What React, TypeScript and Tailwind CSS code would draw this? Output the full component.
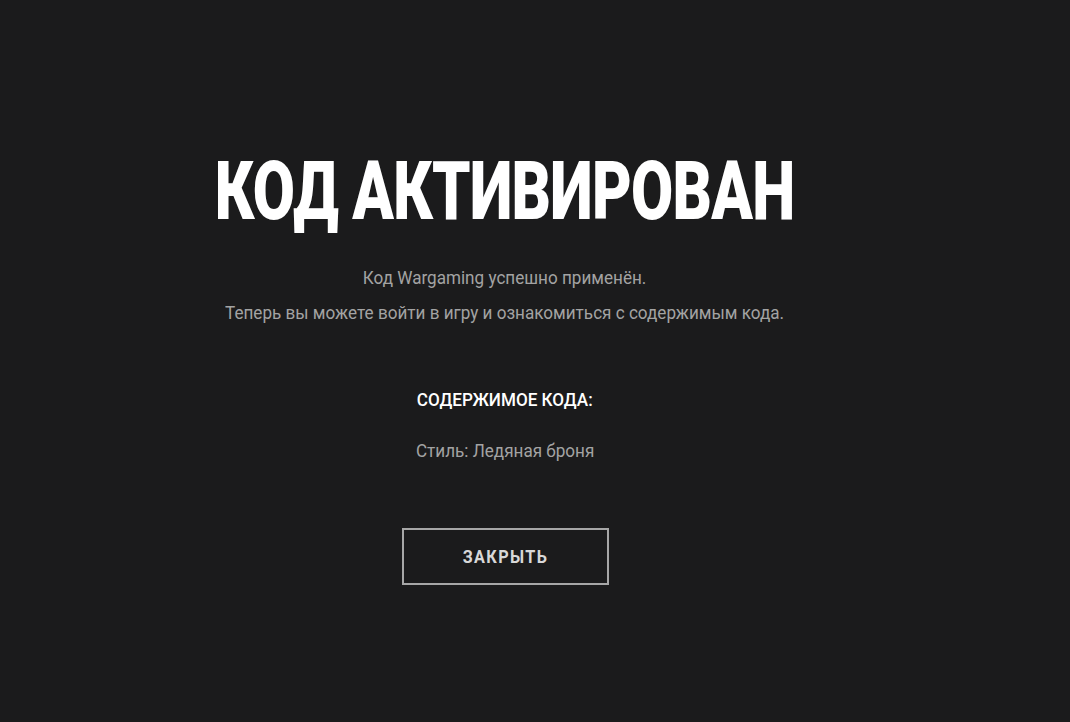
import React from "react";

export default function App() {
  return (
    <div className="w-[1070px] h-[722px] bg-[#1b1b1c] overflow-hidden" style={{ fontFamily: "Roboto, 'Noto Sans', sans-serif" }}>
      <div className="flex flex-col items-center pr-[60px] pt-[150px]">
        <h1 className="text-[82px] leading-[82px] font-black text-white tracking-[-1px] scale-x-[0.746] whitespace-nowrap">
          КОД АКТИВИРОВАН
        </h1>
        <p className="mt-[34px] text-[19px] leading-[24px] text-[#a3a3a3] scale-x-[0.9] whitespace-nowrap">
          Код Wargaming успешно применён.
        </p>
        <p className="mt-[11px] text-[19px] leading-[24px] text-[#a3a3a3] scale-x-[0.9] whitespace-nowrap">
          Теперь вы можете войти в игру и ознакомиться с содержимым кода.
        </p>
        <p className="mt-[63px] text-[19px] leading-[24px] font-medium text-white scale-x-[0.9] whitespace-nowrap">
          СОДЕРЖИМОЕ КОДА:
        </p>
        <p className="mt-[27px] text-[19px] leading-[24px] text-[#a3a3a3] scale-x-[0.9] whitespace-nowrap">
          Стиль: Ледяная броня
        </p>
        <button className="mt-[65px] w-[207px] h-[57px] border-2 border-[#a7a7a7] flex items-center justify-center">
          <span className="text-[18px] font-bold tracking-[1.5px] text-[#d8d8d8] scale-x-[0.9]">ЗАКРЫТЬ</span>
        </button>
      </div>
    </div>
  );
}
